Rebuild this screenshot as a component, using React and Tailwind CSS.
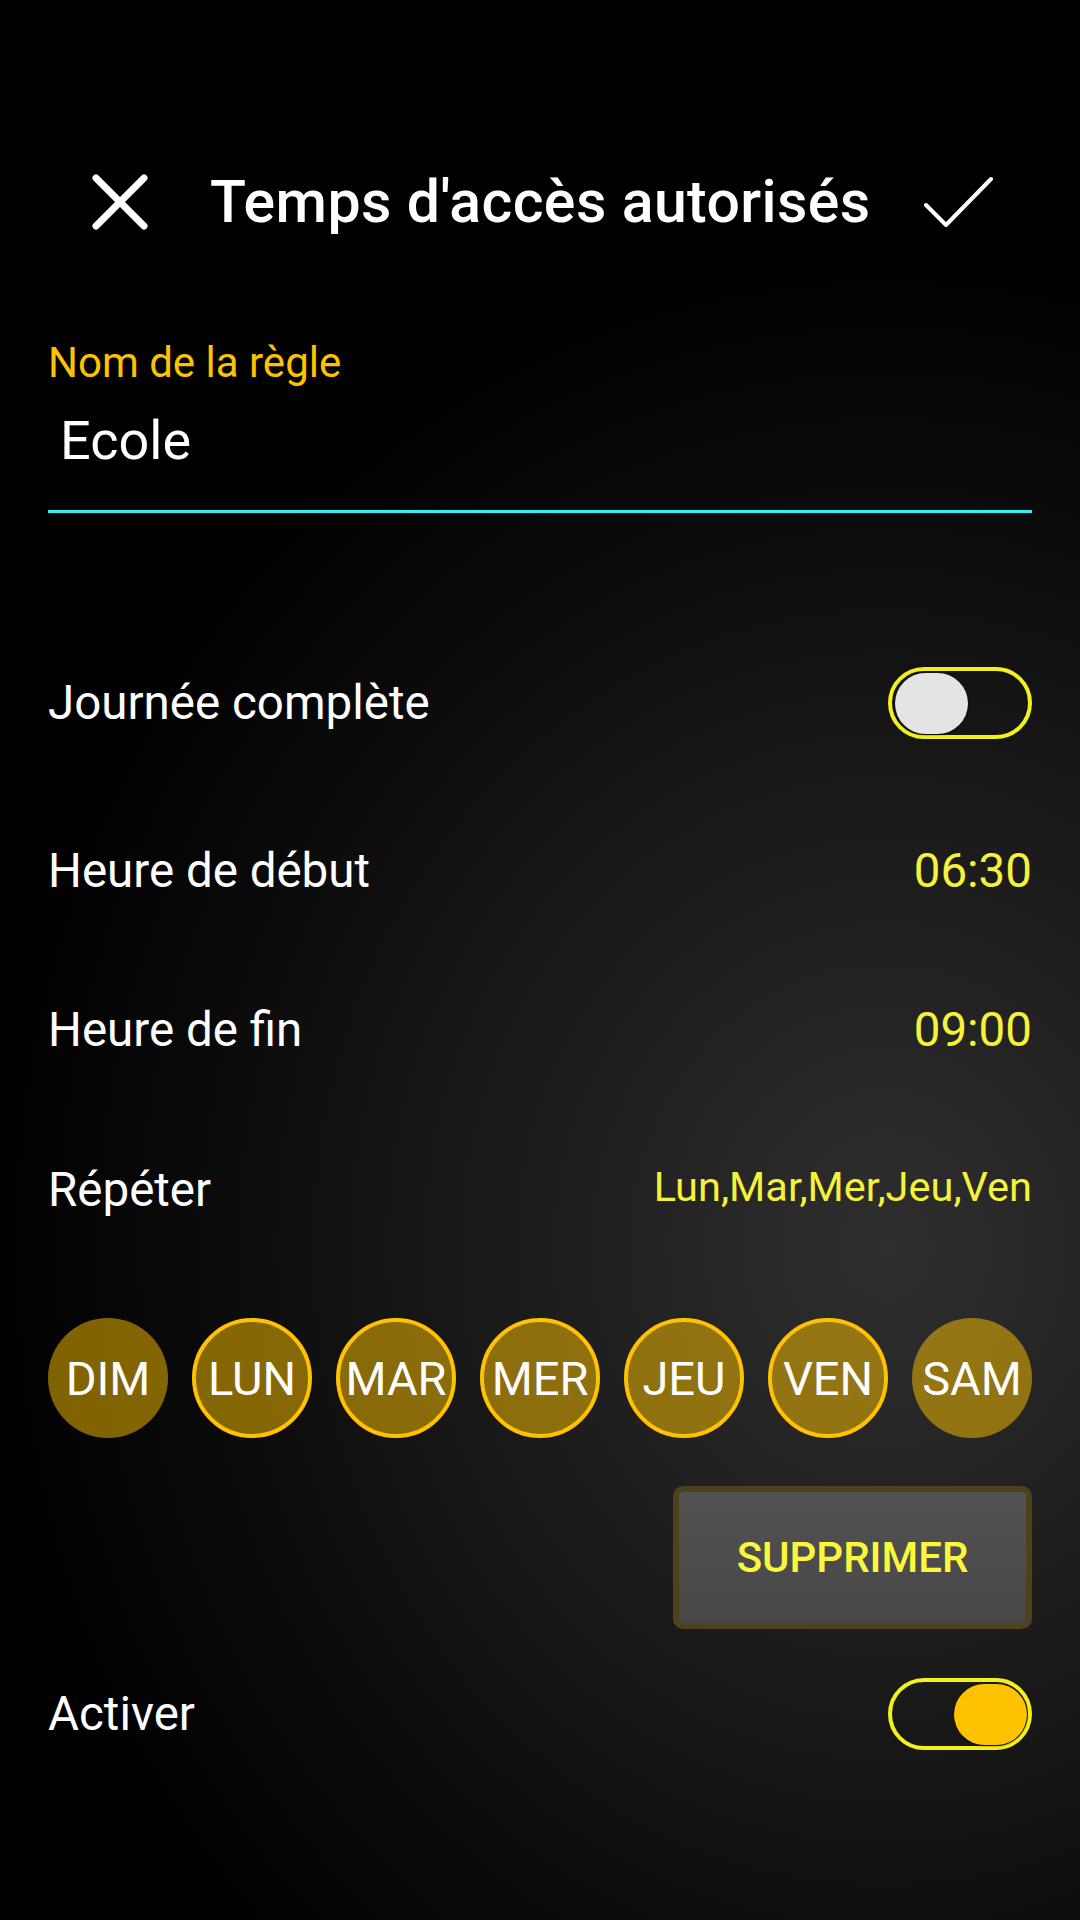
import React from "react";

function Toggle({ on }) {
  return (
    <div className={"flex h-[72px] w-[144px] items-center rounded-full border-[4px] border-[#f4f01c] " + (on ? "justify-end pr-[1px]" : "justify-start pl-[3px]")}>
      <div
        className={
          "h-[61px] w-[73px] rounded-full shadow-[0_1px_2px_rgba(0,0,0,0.6)] " +
          (on ? "bg-[#ffc200]" : "bg-[#e4e4e4]")
        }
      />
    </div>
  );
}

function Row({ label, right, className }) {
  return (
    <div className={"flex h-[72px] items-center justify-between " + (className || "")}>
      <span className="text-[47.5px] leading-[60px] text-white">{label}</span>
      {right}
    </div>
  );
}

const days = [
  { d: "DIM", on: false },
  { d: "LUN", on: true },
  { d: "MAR", on: true },
  { d: "MER", on: true },
  { d: "JEU", on: true },
  { d: "VEN", on: true },
  { d: "SAM", on: false },
];

export default function App() {
  return (
    <div className="h-[1920px] w-[1080px] overflow-hidden bg-[radial-gradient(ellipse_900px_1000px_at_82%_65%,#2f2f2f_0%,#1c1c1c_40%,#0b0b0b_75%,#000_100%)] font-['Roboto','Liberation_Sans',sans-serif]">
      <div className="px-[48px] pt-[142px]">
        {/* Header */}
        <div className="flex h-[120px] items-center">
          <svg className="ml-[43px] h-[58px] w-[58px]" viewBox="0 0 58 58">
            <path d="M5 5 L53 53 M53 5 L5 53" stroke="white" strokeWidth="7" strokeLinecap="round" fill="none" />
          </svg>
          <span className="ml-[61px] text-[59px] font-medium leading-[70px] tracking-[0.4px] text-white">Temps d'accès autorisés</span>
          <svg className="ml-auto mr-[38px] h-[52px] w-[70px]" viewBox="0 0 70 52">
            <path d="M2 29 L22 49 L67 3" stroke="white" strokeWidth="4" strokeLinecap="round" strokeLinejoin="round" fill="none" />
          </svg>
        </div>

        {/* Name field */}
        <div className="mt-[76px] text-[42px] leading-[50px] text-[#ffc200]">Nom de la règle</div>
        <div className="mt-[23px] border-b-[3px] border-[#33f0f0] pb-[39px] pl-[12px] text-[54px] leading-[60px] text-white">Ecole</div>

        {/* Rows */}
        <Row className="mt-[154px]" label="Journée complète" right={<Toggle on={false} />} />
        <Row className="mt-[96px]" label="Heure de début" right={<span className="text-[47.5px] leading-[60px] text-[#f6f23a]">06:30</span>} />
        <Row className="mt-[87px]" label="Heure de fin" right={<span className="text-[47.5px] leading-[60px] text-[#f6f23a]">09:00</span>} />
        <Row
          className="mt-[88px]"
          label="Répéter"
          right={<span className="-mt-[6px] text-[41.5px] leading-[50px] text-[#f6f23a]">Lun,Mar,Mer,Jeu,Ven</span>}
        />

        {/* Days */}
        <div className="mt-[92px] flex justify-between">
          {days.map((x) => (
            <div
              key={x.d}
              className={
                "flex h-[120px] w-[120px] items-center justify-center rounded-full bg-[#ffc200]/50 text-[47px] leading-none text-white " +
                (x.on ? "border-[4px] border-[#ffc200]" : "")
              }
            >
              {x.d}
            </div>
          ))}
        </div>

        {/* Button */}
        <div className="mt-[48px] flex justify-end">
          <div className="flex h-[143px] w-[359px] items-center justify-center rounded-[10px] border-[6px] border-[#4e411b] bg-gradient-to-b from-[#525252] to-[#474747] text-[42px] font-medium text-[#fbf73c]">
            SUPPRIMER
          </div>
        </div>

        <Row className="mt-[49px]" label="Activer" right={<Toggle on={true} />} />
      </div>
    </div>
  );
}
